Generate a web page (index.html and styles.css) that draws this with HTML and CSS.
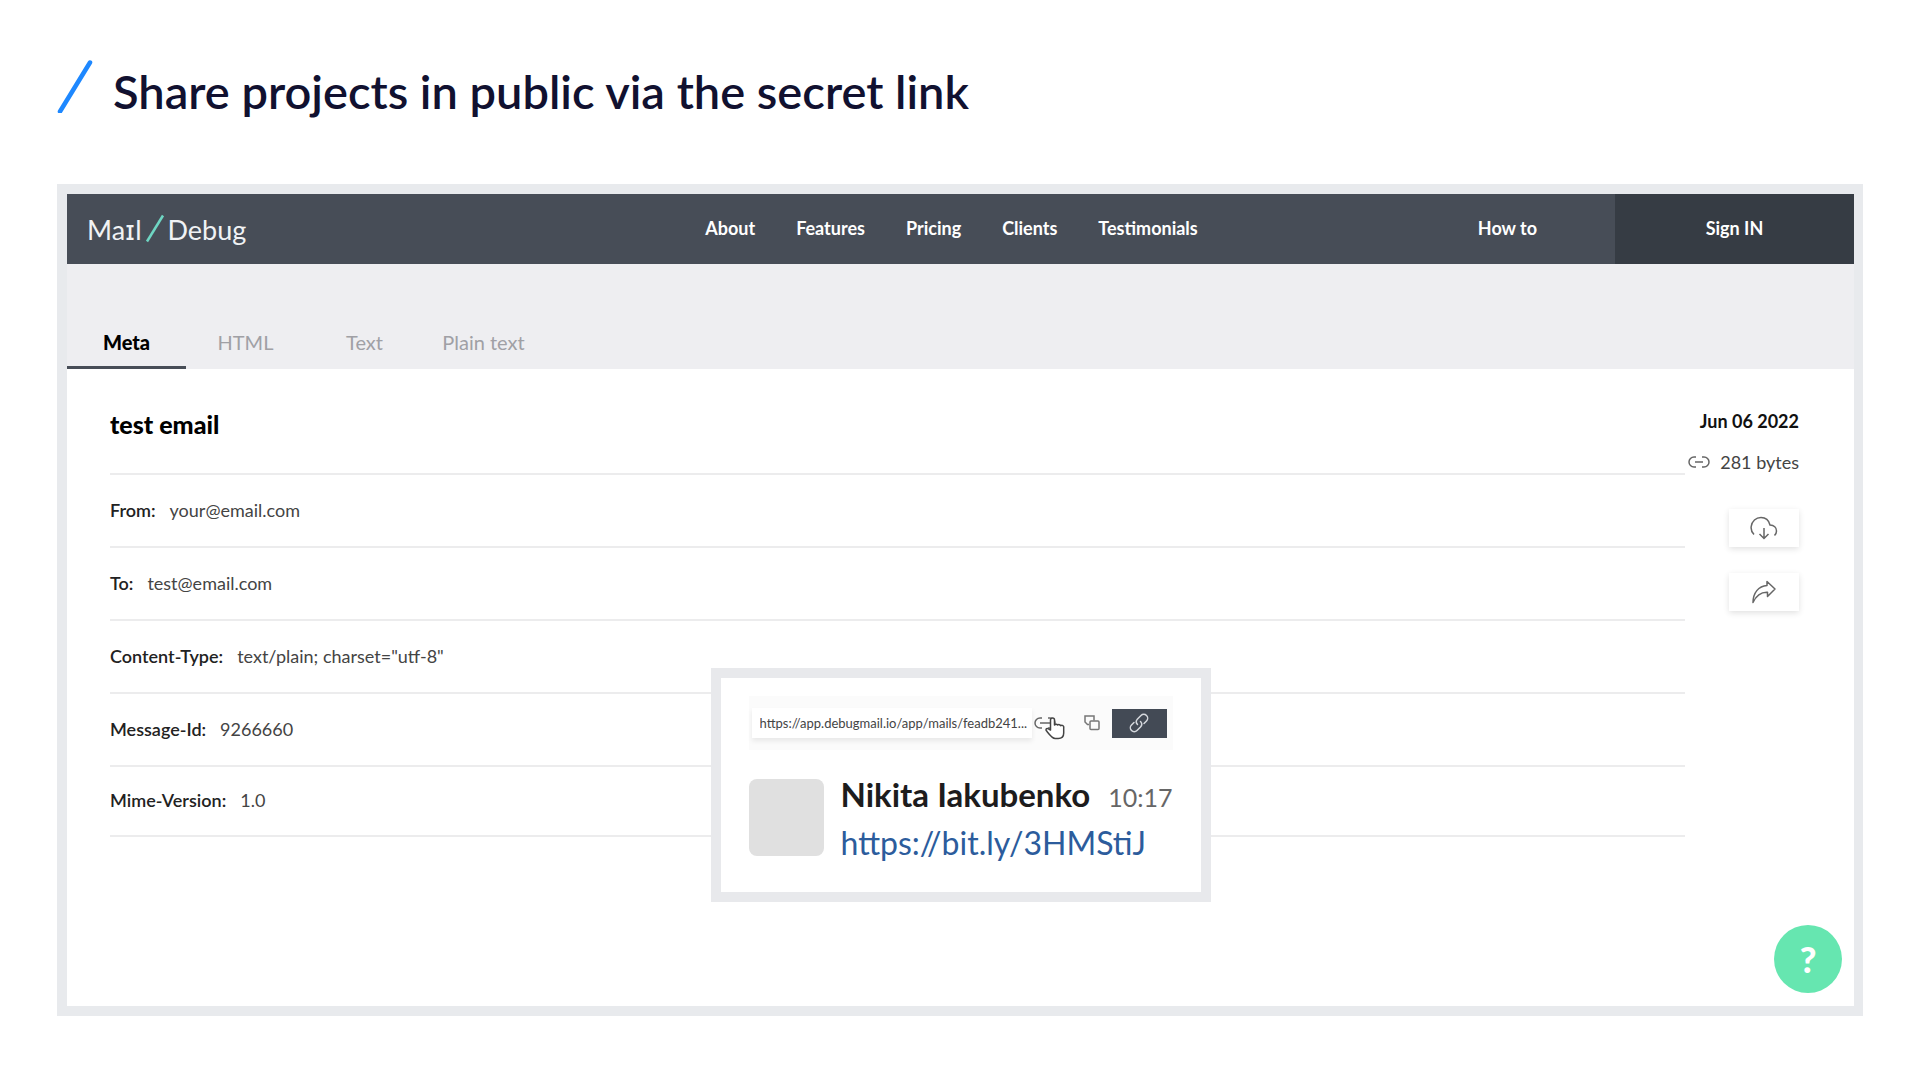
FILE: index.html
```html
<!DOCTYPE html>
<html lang="en">
<head>
<meta charset="UTF-8">
<title>Share projects in public via the secret link</title>
<link rel="stylesheet" href="styles.css">
</head>
<body>
<h1 class="page-title">
<svg width="36" height="54" viewBox="0 0 36 54" aria-hidden="true"><path d="M3 52.500L33 3.500" stroke="#1e88ff" stroke-width="4.500" stroke-linecap="round"/></svg>
<span>Share projects in public via the secret link</span>
</h1>
<div class="frame">
<header class="topbar">
<a class="logo" href="#" aria-label="Mail Debug">
<span>Ma<span class="logo-i">ɪ</span>l</span>
<svg width="20" height="30" viewBox="0 0 20 30" aria-hidden="true"><path d="M2 27.500L18 1.500" stroke="#6fd6c3" stroke-width="2.500"/></svg>
<span>Debug</span>
</a>
<nav class="main-nav">
<a href="#">About</a>
<a href="#">Features</a>
<a href="#">Pricing</a>
<a href="#">Clients</a>
<a href="#">Testimonials</a>
</nav>
<div class="account">
<a class="how-to" href="#">How to</a>
<a class="sign-in" href="#">Sign IN</a>
</div>
</header>
<div class="tabs" role="tablist">
<button class="tab active" role="tab" aria-selected="true">Meta</button>
<button class="tab" role="tab">HTML</button>
<button class="tab" role="tab">Text</button>
<button class="tab" role="tab">Plain text</button>
</div>
<main class="mail">
<div class="mail-body">
<h2>test email</h2>
<dl class="meta">
<div class="meta-row"><dt>From:</dt><dd>your@email.com</dd></div>
<div class="meta-row"><dt>To:</dt><dd>test@email.com</dd></div>
<div class="meta-row"><dt>Content-Type:</dt><dd>text/plain; charset="utf-8"</dd></div>
<div class="meta-row"><dt>Message-Id:</dt><dd>9266660</dd></div>
<div class="meta-row"><dt>Mime-Version:</dt><dd>1.0</dd></div>
</dl>
</div>
<aside class="mail-side">
<time class="date">Jun 06 2022</time>
<div class="size">
<svg width="22" height="14" viewBox="0 0 22 14" fill="none" stroke="#666" stroke-width="1.500" aria-hidden="true"><path d="M8 2H6a5 5 0 0 0 0 10h2M14 2h2a5 5 0 0 1 0 10h-2M7 7h8"/></svg>
<span>281 bytes</span>
</div>
<button class="action" aria-label="Download">
<svg width="28" height="24" viewBox="0 0 28 24" fill="none" stroke="#666" stroke-width="1.500" aria-hidden="true"><path d="M4 18.500C1.500 16 .800 13.500 1.200 10.500 1.800 5 6 1.500 11 1.500c4.500 0 7.800 2.500 9 7.500 4 .200 6.500 2.700 6.500 6 0 1.800-.700 3.200-2 4.500M14 12v10.500M9.500 18l4.500 4.500 4.500-4.500"/></svg>
</button>
<button class="action" aria-label="Share">
<svg width="26" height="24" viewBox="0 0 26 24" fill="none" stroke="#666" stroke-width="1.500" stroke-linejoin="round" aria-hidden="true"><path d="M16 1.500L24 9l-7.500 7.500v-4.200C10 12 5.500 15 2 22.500 2 13 7.500 6 16 5.500z"/></svg>
</button>
</aside>
<section class="share-popup">
<div class="share-bar">
<input class="share-url" type="text" readonly aria-label="Secret link" value="https://app.debugmail.io/app/mails/feadb241...">
<div class="share-link-icon">
<svg width="22" height="12" viewBox="0 0 22 12" fill="none" stroke="#666" stroke-width="1.500" aria-hidden="true"><path d="M8 1H6a5 5 0 0 0 0 10h2M14 1h2a5 5 0 0 1 0 10h-2M6 6h10"/></svg>
<svg class="cursor" width="20" height="23" viewBox="0 0 20 23" fill="#fff" stroke="#444" stroke-width="1.500" stroke-linejoin="round" aria-hidden="true"><path d="M5.500 13V3a2 2 0 0 1 4 0v5a2 2 0 0 1 3.200 0 2 2 0 0 1 3 .800 1.800 1.800 0 0 1 3 1.700V16c0 3.500-2 5.500-5.500 5.500h-3C7 21.500 4 17 1.200 13.500c-.700-1.700 1-2.500 2.300-1.700z"/></svg>
</div>
<button class="copy-btn" aria-label="Copy">
<svg width="16" height="16" viewBox="0 0 16 16" fill="none" stroke="#777" stroke-width="1.500" aria-hidden="true"><path d="M5 9.500H3.500L1 7V1h9v4.500"/><rect x="6" y="6" width="9" height="8.500" rx="1"/></svg>
</button>
<button class="link-btn" aria-label="Create link">
<svg width="20" height="20" viewBox="0 0 20 20" fill="none" stroke="#d5d8dd" stroke-width="1.500" stroke-linecap="round" aria-hidden="true"><path d="M8.500 11.500a4 4 0 0 1 0-5.500l3.500-3.500a3.800 3.800 0 0 1 5.500 5.500L15 10.500M11.500 8.500a4 4 0 0 1 0 5.500L8 17.500A3.800 3.800 0 0 1 2.500 12L5 9.500"/></svg>
</button>
</div>
<div class="message">
<div class="avatar"></div>
<div class="message-text">
<p class="message-head"><strong>Nikita Iakubenko</strong><time>10:17</time></p>
<a href="https://bit.ly/3HMStiJ">https://bit.ly/3HMStiJ</a>
</div>
</div>
</section>
<button class="help" aria-label="Help">?</button>
</main>
</div>
</body>
</html>
```

FILE: styles.css
```css
* {
  box-sizing: border-box;
}
body {
  margin: 0;
  padding: 56px 57px;
  background-color: #ffffff;
  color: #222222;
  font-family: Lato, "Open Sans", sans-serif;
}
a {
  color: inherit;
  text-decoration: none;
}
button {
  border: 0;
  padding: 0;
  background: none;
  font-family: inherit;
  cursor: pointer;
}
svg {
  display: block;
  flex: none;
}
.page-title {
  display: flex;
  align-items: flex-start;
  gap: 20px;
  height: 64px;
  margin: 0 0 64px;
  padding-top: 3px;
  color: #111130;
  font-size: 47px;
  font-weight: 600;
  line-height: 64px;
}
.frame {
  border: 10px solid #e8eaed;
  border-right-width: 9px;
  background-color: #ffffff;
}

/* header */
.topbar {
  display: grid;
  grid-template-columns: 1fr auto 1fr;
  height: 70px;
  background-color: #474d57;
  color: #ffffff;
  font-size: 18px;
  font-weight: bold;
}
.logo {
  display: flex;
  align-items: center;
  gap: 3px;
  padding-left: 20px;
  color: #f0f2f4;
  font-size: 27px;
  font-weight: normal;
}
.logo-i {
  font-family: "DejaVu Sans", sans-serif;
}
.main-nav {
  display: flex;
  align-items: center;
  gap: 41px;
  padding: 0 18px 2px 0;
}
.account {
  display: flex;
  justify-content: flex-end;
}
.how-to, .sign-in {
  display: flex;
  align-items: center;
  justify-content: center;
  padding-bottom: 2px;
}
.how-to {
  padding-right: 78px;
}
.sign-in {
  width: 239px;
  background-color: #363c44;
}

/* tabs */
.tabs {
  display: flex;
  padding-top: 54px;
  background-color: #eeeef1;
}
.tab {
  width: 119px;
  height: 51px;
  border-bottom: 3px solid transparent;
  color: #a0a0a5;
  font-size: 20px;
}
.tab.active {
  border-bottom-color: #474d57;
  color: #000000;
  font-weight: 900;
}

/* mail */
.mail {
  position: relative;
  display: flex;
  min-height: 637px;
  padding: 32px 55px 0 43px;
}
.mail-body {
  flex: 1;
}
.mail-body h2 {
  height: 74px;
  margin: 0;
  border-bottom: 2px solid #ececed;
  color: #000000;
  font-size: 25px;
  font-weight: 900;
  line-height: 46px;
}
.meta {
  margin: 0;
}
.meta-row {
  display: flex;
  align-items: center;
  gap: 14px;
  height: 73px;
  padding-bottom: 2px;
  border-bottom: 2px solid #ececed;
  font-size: 18px;
}
.meta-row:last-child {
  height: 70px;
}
.meta dt {
  font-weight: 600;
}
.meta dd {
  margin: 0;
  color: #444444;
}
.mail-side {
  display: flex;
  flex-direction: column;
  align-items: flex-end;
  width: 114px;
  padding-top: 8px;
}
.date {
  color: #111111;
  font-size: 18px;
  font-weight: bold;
  line-height: 24px;
}
.size {
  display: flex;
  align-items: center;
  gap: 10px;
  margin: 17px 0 35px;
  color: #444444;
  font-size: 18px;
  line-height: 24px;
}
.action {
  display: flex;
  align-items: center;
  justify-content: center;
  width: 70px;
  height: 38px;
  margin-bottom: 26px;
  box-shadow: 0 2px 6px rgba(0,0,0,0.12);
}

/* share popup */
.share-popup {
  position: absolute;
  top: 299px;
  left: calc(50% - 250px);
  width: 500px;
  height: 234px;
  padding: 18px 28px;
  border: 10px solid #e8e9ec;
  background-color: #ffffff;
}
.share-bar {
  display: flex;
  align-items: center;
  height: 54px;
  padding-right: 6px;
  background-color: #fbfbfb;
}
.share-url {
  width: 280px;
  height: 30px;
  margin-left: 3px;
  padding: 0 0 0 8px;
  border: 0;
  background-color: #ffffff;
  box-shadow: 0 3px 5px rgba(0,0,0,0.08);
  color: #444444;
  font-family: inherit;
  font-size: 13px;
}
.share-link-icon {
  position: relative;
  margin-left: 2px;
}
.cursor {
  position: absolute;
  top: 0;
  left: 11px;
}
.copy-btn {
  margin-left: 28px;
}
.link-btn {
  display: flex;
  align-items: center;
  justify-content: center;
  width: 55px;
  height: 29px;
  margin-left: auto;
  background-color: #434a55;
}
.message {
  display: flex;
  gap: 17px;
  margin-top: 29px;
}
.avatar {
  width: 75px;
  height: 77px;
  border-radius: 8px;
  background-color: #e0e0e0;
}
.message-text {
  margin-top: -8px;
  font-size: 32px;
  line-height: 46px;
  white-space: nowrap;
}
.message-text a {
  color: #2c5c9c;
}
.message-head {
  display: flex;
  align-items: baseline;
  gap: 18px;
  margin: 0;
  color: #1d1c1d;
}
.message-head strong {
  font-size: 33px;
}
.message-head time {
  color: #666666;
  font-size: 25px;
}
.help {
  position: absolute;
  right: 12px;
  bottom: 13px;
  width: 68px;
  height: 68px;
  border-radius: 50%;
  background-color: #66e6b0;
  color: #ffffff;
  font-size: 36px;
  font-weight: 900;
}
```
